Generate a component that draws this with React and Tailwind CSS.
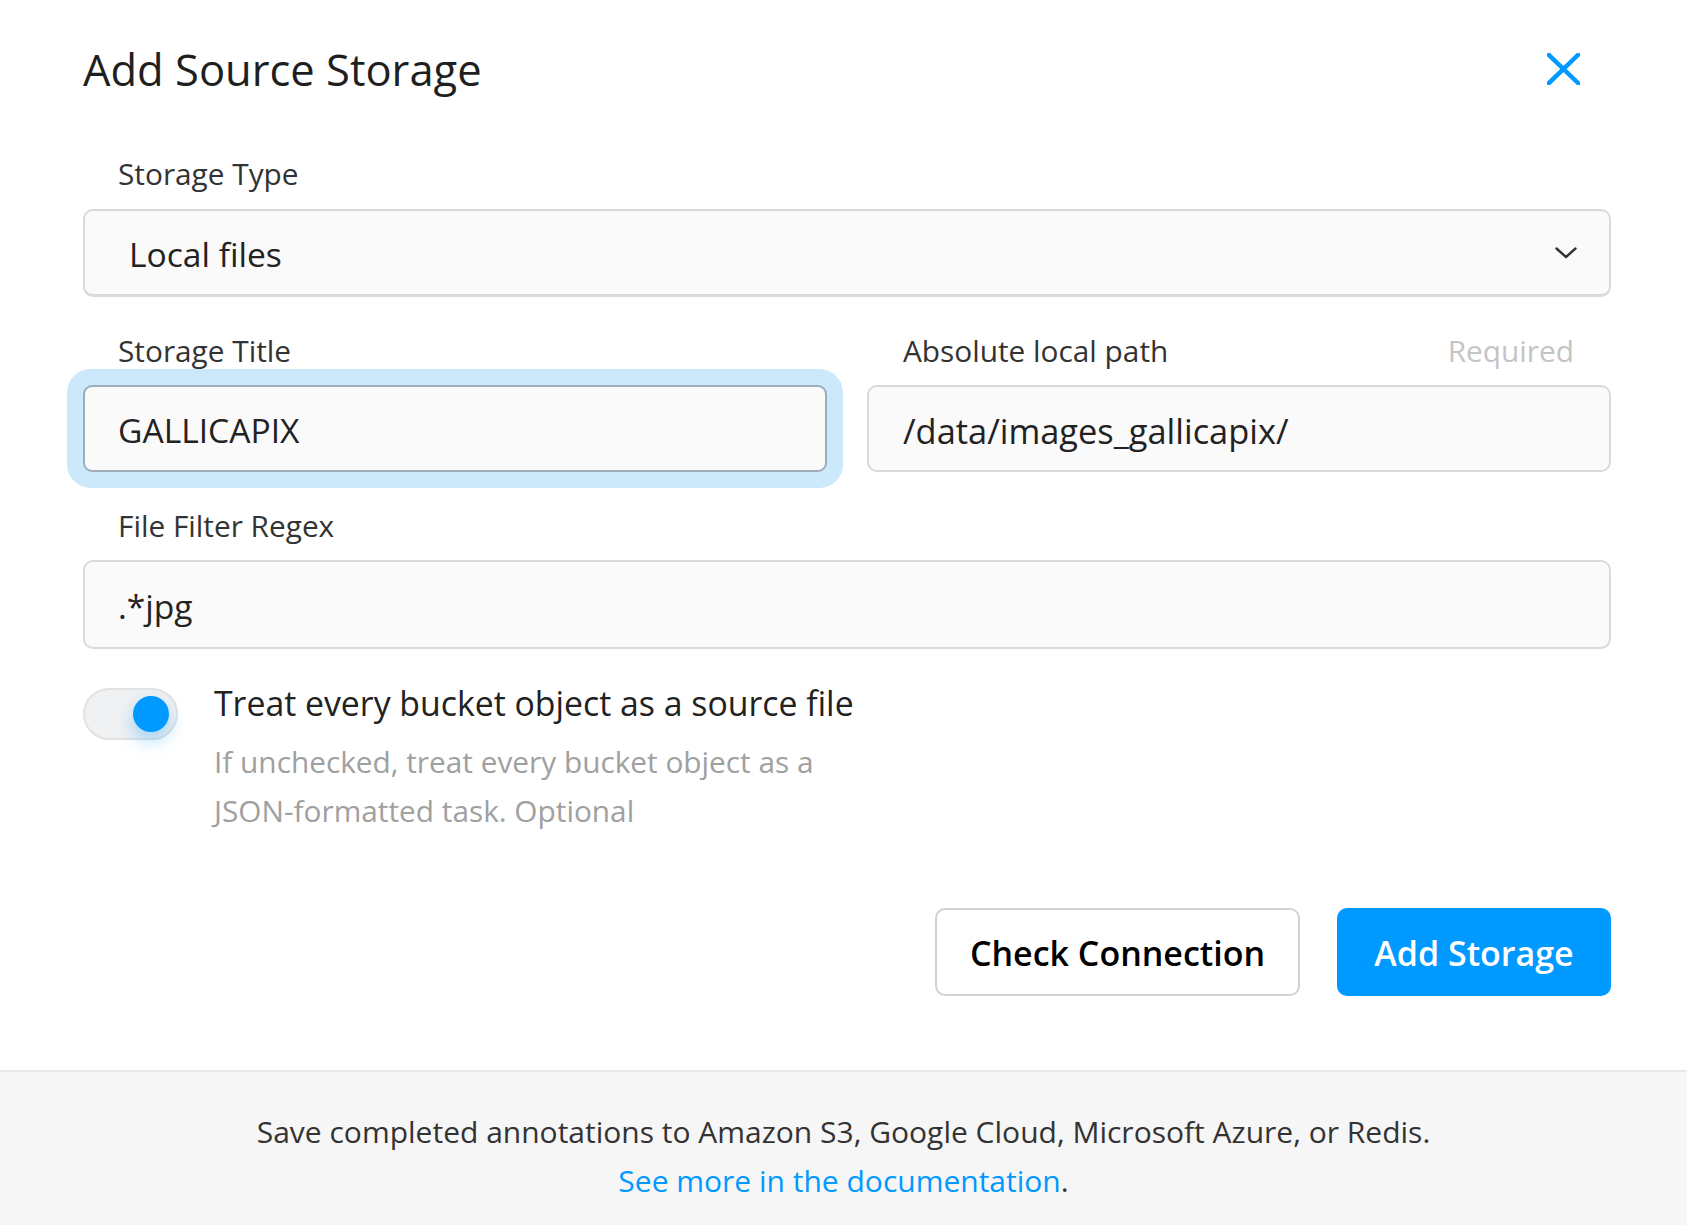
export default function App() {
  return (
    <div className="min-h-screen flex flex-col bg-white font-['Open_Sans',sans-serif]">
      <div className="pl-[83px] pr-[76px] pt-[40px]">
        <div className="flex items-center justify-between h-[60px]">
          <h2 className="text-[43.5px] leading-[60px] font-normal text-[#1f1f1f]">Add Source Storage</h2>
          <button className="mr-[31px] -mt-[3px] flex items-center justify-center">
            <svg width="33" height="32" viewBox="0 0 33 32" fill="none">
              <path d="M2 2L31 30M31 2L2 30" stroke="#0099ff" strokeWidth="4.5" strokeLinecap="square" />
            </svg>
          </button>
        </div>

        <div className="mt-[54px]">
          <label className="block pl-[35px] text-[29.8px] leading-[40px] text-[#333]">Storage Type</label>
          <div className="mt-[15px] h-[88px] flex items-center justify-between rounded-[10px] border-2 border-[#dadada] border-b-[3px] bg-[#fafafa] pl-[44px] pr-[32px]">
            <span className="pt-[4px] text-[33.6px] text-[#222]">Local files</span>
            <svg width="22" height="12" viewBox="0 0 22 12" fill="none">
              <path d="M1.5 1.5L11 10L20.5 1.5" stroke="#333" strokeWidth="2.4" strokeLinecap="round" strokeLinejoin="round" />
            </svg>
          </div>
        </div>

        <div className="mt-[34px] grid grid-cols-2 gap-[40px]">
          <div>
            <label className="block pl-[35px] text-[29.8px] leading-[40px] text-[#333]">Storage Title</label>
            <div className="mt-[14px] h-[87px] flex items-center rounded-[9px] border-2 border-[#9eadb9] bg-[#fafafa] pl-[33px] shadow-[0_0_0_16px_#cce9fc]">
              <span className="pt-[4px] text-[33.6px] text-[#222]">GALLICAPIX</span>
            </div>
          </div>
          <div>
            <div className="flex justify-between pl-[36px] pr-[37px]">
              <label className="text-[29.8px] leading-[40px] text-[#333]">Absolute local path</label>
              <span className="text-[29.8px] leading-[40px] text-[#c4c4c4]">Required</span>
            </div>
            <div className="mt-[14px] h-[87px] flex items-center rounded-[10px] border-2 border-[#dadada] bg-[#fafafa] pl-[34px]">
              <span className="pt-[4px] text-[34.4px] text-[#222]">/data/images_gallicapix/</span>
            </div>
          </div>
        </div>

        <div className="mt-[34px]">
          <label className="block pl-[35px] text-[29.8px] leading-[40px] text-[#333]">File Filter Regex</label>
          <div className="mt-[14px] h-[89px] flex items-center rounded-[10px] border-2 border-[#dadada] bg-[#fafafa] pl-[33px]">
            <span className="pt-[4px] text-[33.6px] text-[#222]">.*jpg</span>
          </div>
        </div>

        <div className="mt-[39px] flex items-start gap-[36px]">
          <div className="w-[95px] h-[52px] shrink-0 rounded-full border-2 border-[#e2e2e2] bg-[#f0f1f2] flex items-center justify-end pr-[7px]">
            <div className="w-[36px] h-[36px] rounded-full bg-[#0099ff] shadow-[0_8px_18px_rgba(0,153,255,0.35)]"></div>
          </div>
          <div className="-mt-[6px]">
            <div className="text-[33.8px] leading-[42px] text-[#222]">Treat every bucket object as a source file</div>
            <div className="mt-[13px] text-[29.8px] leading-[49px] text-[#a0a0a0] w-[640px]">
              If unchecked, treat every bucket object as a
              <br />
              JSON-formatted task. Optional
            </div>
          </div>
        </div>

        <div className="mt-[73px] flex justify-end gap-[37px]">
          <button className="w-[365px] h-[88px] rounded-[10px] border-2 border-[#d2d2d2] bg-white pt-[3px] text-[34px] font-semibold text-black">
            Check Connection
          </button>
          <button className="w-[274px] h-[88px] rounded-[10px] bg-[#0099ff] pt-[3px] text-[34px] font-semibold text-white">
            Add Storage
          </button>
        </div>
      </div>

      <div className="flex-1 mt-[74px] border-t-2 border-[#e9e9e9] bg-[#f6f6f6] pt-[35px] pb-[20px] text-center text-[30px] leading-[49px] text-[#333]">
        <div>Save completed annotations to Amazon S3, Google Cloud, Microsoft Azure, or Redis.</div>
        <div>
          <a className="text-[#0099ff]">See more in the documentation</a>.
        </div>
      </div>
    </div>
  );
}
